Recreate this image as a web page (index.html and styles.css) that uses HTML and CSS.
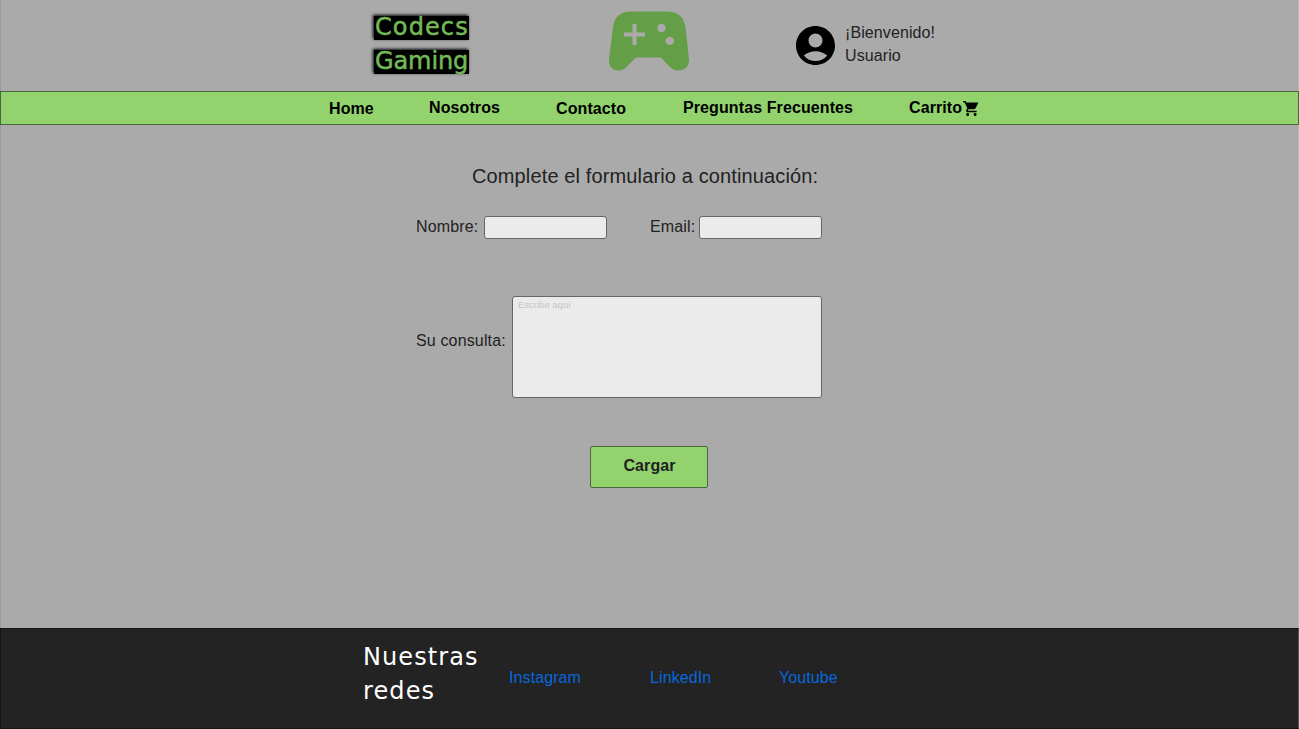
FILE: index.html
```
<!DOCTYPE html>
<html lang="es">
<head>
<meta charset="utf-8">
<title>Codecs Gaming</title>
<link rel="stylesheet" href="styles.css">
</head>
<body>
<div class="page">
  <header class="header">
    <h1 class="logo"><span class="logo-line logo-first">Codecs</span><span class="logo-line logo-second">Gaming</span></h1>
    <svg class="gamepad" viewBox="0 0 82 60" aria-hidden="true">
      <path fill="#649f48" fill-rule="evenodd" d="M23 .5H59Q75 .5 77.500 16L81 48C81.500 56 76 59.500 70 59.500C65.500 59.500 63 57 60 54L53 46.500H28L20 54.500C17 58 14 59.500 10.500 59.500C4 59.500 .5 55 1 48L5 16Q7 .5 23 .5ZM24.500 13V21.500H16V25.500H24.500V34H28.500V25.500H37V21.500H28.500V13ZM53.500 12.800A4.200 4.200 0 1 0 53.500 21.200A4.200 4.200 0 1 0 53.500 12.800ZM61.800 25.700A4.200 4.200 0 1 0 61.800 34.100A4.200 4.200 0 1 0 61.800 25.700Z"/>
    </svg>
    <svg class="avatar" viewBox="2 2 20 20" aria-hidden="true">
      <path d="M12 2C6.480 2 2 6.480 2 12s4.480 10 10 10 10-4.480 10-10S17.520 2 12 2zm0 3.800a3.600 3.600 0 0 1 0 7.200 3.600 3.600 0 0 1 0-7.200zM12 20c-2.300 0-4.400-1-6-2.850C7.500 15.900 9.700 15 12 15s4.500.9 6 2.150C16.400 19 14.300 20 12 20z"/>
    </svg>
    <p class="welcome">¡Bienvenido!<br>Usuario</p>
  </header>
  <nav class="nav">
    <a class="low">Home</a>
    <a>Nosotros</a>
    <a class="low">Contacto</a>
    <a>Preguntas Frecuentes</a>
    <a class="cart">Carrito<svg class="cart-icon" viewBox="1 2 21 20" aria-hidden="true"><path d="M7 18c-1.100 0-1.990.9-1.990 2S5.900 22 7 22s2-.9 2-2-.9-2-2-2zM1 2v2h2l3.600 7.590-1.350 2.450c-.16.280-.25.610-.25.960 0 1.100.9 2 2 2h12v-2H7.420c-.14 0-.25-.11-.25-.25l.03-.12.900-1.630h7.450c.750 0 1.410-.41 1.750-1.030l3.580-6.490A1 1 0 0 0 20 4H5.210l-.94-2H1zm16 16c-1.100 0-1.990.9-1.990 2s.890 2 1.990 2 2-.9 2-2-.9-2-2-2z"/></svg></a>
  </nav>
  <main class="main">
    <form class="form">
      <h2 class="title">Complete el formulario a continuación:</h2>
      <div class="row">
        <label class="name" for="nombre">Nombre:</label><input id="nombre" type="text">
        <label class="email" for="email">Email:</label><input id="email" type="text">
      </div>
      <div class="query">
        <label for="consulta">Su consulta:</label>
        <textarea id="consulta" placeholder="Escribe aquí"></textarea>
      </div>
      <button class="submit" type="button">Cargar</button>
    </form>
  </main>
  <footer class="footer">
    <h2 class="networks">Nuestras<br>redes</h2>
    <a>Instagram</a>
    <a>LinkedIn</a>
    <a>Youtube</a>
  </footer>
</div>
</body>
</html>
```
FILE: styles.css
```
* { box-sizing: border-box; }
body {
  margin: 0;
  background: #aaa;
  color: #222;
  font: 16px/23px "Liberation Sans", Arial, sans-serif;
}
h1, h2, p { margin: 0; font-weight: 400; }
.page {
  display: grid;
  grid-template-rows: 91px 34px 503px 101px;
  height: 729px;
  overflow: hidden;
}
.header {
  display: grid;
  grid-template-columns: 235px 188px 49px 120px;
  align-items: start;
  padding-left: 372px;
  border-left: 1px solid #999;
  border-right: 1px solid #bbb;
}
.logo {
  display: grid;
  row-gap: 10px;
  justify-items: start;
  padding: 16px 0 0 1px;
  font: 24px/24px "DejaVu Sans", sans-serif;
}
.logo-line {
  width: 95px;
  height: 24px;
  padding-left: 1px;
  background: #000;
  color: #74b957;
  -webkit-text-stroke: 0.5px #74b957;
  box-shadow: -1px -1px 3px #000;
  white-space: nowrap;
}
.logo-first { line-height: 22px; letter-spacing: 1.1px; }
.logo-second { line-height: 23px; letter-spacing: -0.1px; }
.gamepad { width: 82px; height: 60px; margin-top: 11px; }
.avatar { width: 39px; height: 39px; margin-top: 26px; }
.welcome { margin-top: 21px; letter-spacing: 0.1px; }
.nav {
  display: grid;
  grid-template-columns: 100px 127px 127px 226px 80px;
  padding-left: 328px;
  background: #92d36e;
  border: 1px solid #4b6540;
  color: #000;
  font-weight: 700;
  line-height: 31px;
  letter-spacing: 0.1px;
  white-space: nowrap;
}
.low { line-height: 33px; }
.cart { display: flex; align-items: flex-start; }
.cart-icon { width: 16px; height: 15px; margin: 9px 0 0 1px; }
.main {
  padding: 37px 0 0 415px;
  border-left: 1px solid #999;
  border-right: 1px solid #bbb;
}
.form { width: 406px; }
.title {
  padding-left: 56px;
  font-size: 20px;
  line-height: 28px;
  letter-spacing: 0.13px;
  white-space: nowrap;
}
.row { display: flex; align-items: flex-start; margin-top: 26px; }
.row label { line-height: 21px; letter-spacing: 0.15px; }
.name { width: 68px; }
.email { width: 49px; margin-left: 43px; }
input, textarea {
  margin: 0;
  background: #ebebeb;
  border: 1px solid #666;
  border-radius: 3px;
}
input { width: 123px; height: 23px; }
.query { display: flex; margin-top: 57px; }
.query label {
  width: 96px;
  padding-top: 33px;
  letter-spacing: 0.15px;
  white-space: nowrap;
}
textarea {
  width: 310px;
  height: 102px;
  padding: 2px 5px;
  resize: none;
  font: 9.500px/11px "Liberation Sans", Arial, sans-serif;
}
textarea::placeholder { color: #c5c5c5; opacity: 1; }
.submit {
  display: block;
  width: 118px;
  height: 42px;
  margin: 48px 0 0 174px;
  padding: 0 0 3px 1px;
  background: #92d36e;
  border: 1px solid #4b6540;
  border-radius: 2px;
  color: #222;
  font: 700 16px "Liberation Sans", Arial, sans-serif;
  letter-spacing: 0.1px;
}
.footer {
  display: grid;
  grid-template-columns: 146px 141px 129px 80px;
  padding-left: 362px;
  background: #232323;
  border: 1px solid #151515;
  border-right-color: #555;
  color: #0767db;
}
.footer a { padding-top: 37px; letter-spacing: 0.1px; }
.networks {
  padding-top: 11px;
  color: #fff;
  font: 24px/34px "DejaVu Sans", sans-serif;
  letter-spacing: 1.1px;
}
```
